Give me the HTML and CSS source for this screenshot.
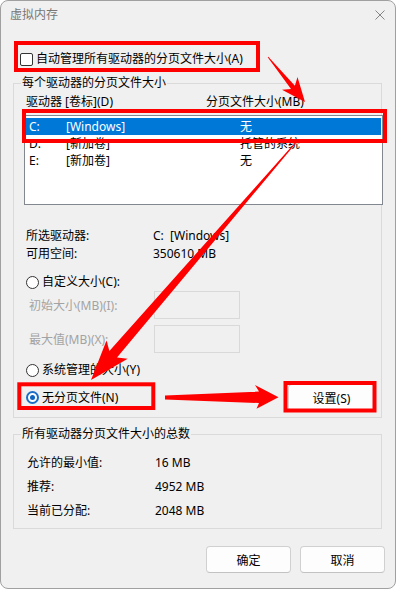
FILE: index.html
```html
<!DOCTYPE html>
<html lang="zh-CN">
<head>
<meta charset="utf-8">
<title>虚拟内存</title>
<link rel="stylesheet" href="styles.css">
</head>
<body>
<div class="window">
  <div class="titlebar">
    <span class="title">虚拟内存</span>
    <svg class="close" width="10" height="10" viewBox="0 0 10 10"><path d="M0.5 0.5L9.5 9.5M9.5 0.5L0.5 9.5" stroke="#858585" stroke-width="1" fill="none"/></svg>
  </div>
  <div class="content">
    <div class="check-row">
      <span class="checkbox"></span>
      <span>自动管理所有驱动器的分页文件大小(A)</span>
    </div>

    <div class="group group-drives">
      <div class="legend">每个驱动器的分页文件大小</div>
      <div class="list-head">
        <span class="head-drive">驱动器 [卷标](D)</span>
        <span>分页文件大小(MB)</span>
      </div>
      <div class="listbox">
        <div class="row selected"><span class="c1">C:</span><span class="c2">[Windows]</span><span class="c3">无</span></div>
        <div class="row"><span class="c1">D:</span><span class="c2">[新加卷]</span><span class="c3">托管的系统</span></div>
        <div class="row"><span class="c1">E:</span><span class="c2">[新加卷]</span><span class="c3">无</span></div>
      </div>
      <div class="info">
        <div class="info-row"><span class="info-label">所选驱动器:</span><span class="info-val">C:  [Windows]</span></div>
        <div class="info-row"><span class="info-label">可用空间:</span><span class="info-val">350610 MB</span></div>
      </div>
      <div class="radio-row r-custom"><span class="radio"></span><span>自定义大小(C):</span></div>
      <div class="field-row f-init"><span class="field-label">初始大小(MB)(I):</span><span class="input"></span></div>
      <div class="field-row f-max"><span class="field-label">最大值(MB)(X):</span><span class="input"></span></div>
      <div class="radio-row r-system"><span class="radio"></span><span>系统管理的大小(Y)</span></div>
      <div class="set-row">
        <div class="radio-row"><span class="radio checked"></span><span>无分页文件(N)</span></div>
        <button class="btn btn-set">设置(S)</button>
      </div>
    </div>

    <div class="group group-total">
      <div class="legend">所有驱动器分页文件大小的总数</div>
      <div class="totals">
        <div class="total-row"><span class="total-label">允许的最小值:</span><span>16 MB</span></div>
        <div class="total-row"><span class="total-label">推荐:</span><span>4952 MB</span></div>
        <div class="total-row"><span class="total-label">当前已分配:</span><span>2048 MB</span></div>
      </div>
    </div>

    <div class="actions">
      <button class="btn btn-dialog">确定</button>
      <button class="btn btn-dialog">取消</button>
    </div>
  </div>

  <svg class="annot" width="396" height="589" viewBox="0 0 396 589">
    <g fill="none" stroke="#ff0000" stroke-width="4">
      <rect x="16" y="43" width="242" height="27"/>
      <rect x="24" y="111" width="361" height="30"/>
      <rect x="19.3" y="384.3" width="134" height="23.7"/>
      <rect x="285.5" y="383" width="89" height="27.5"/>
    </g>
    <g fill="#ff0000">
      <polygon points="268.3,56.7 294.9,85.7 297.5,77.1 305,102 282,89.8 291,88.9 267.7,57.3"/>
      <polygon points="298.4,140.3 117,357.6 127.7,358.8 91,380 106.5,340.6 109.4,351 297.6,139.7"/>
      <polygon points="165,395.5 259,391.5 255,385 278.5,397.3 256.5,408.8 259,403 165,399.5"/>
    </g>
  </svg>
</div>
</body>
</html>
```

FILE: styles.css
```css
body {
  margin: 0;
  font-family: "Noto Sans", "Noto Sans CJK SC", sans-serif;
  font-size: 12px;
  color: #000;
  background: #fff;
}

.window {
  position: relative;
  width: 396px;
  height: 589px;
  box-sizing: border-box;
  border: 1px solid #a0a0a0;
  border-radius: 8px;
  background: #f0f0f0;
  overflow: hidden;
}

.titlebar {
  height: 28px;
  display: flex;
  align-items: center;
  justify-content: space-between;
  padding: 0 10px 0 9px;
}

.title {
  color: #777;
  line-height: 16px;
}

.close {
  display: block;
}

.content {
  padding: 0 10px 0 12px;
}

.check-row {
  display: flex;
  align-items: center;
  height: 16px;
  line-height: 16px;
  margin: 22px 0 0 7px;
  gap: 3px;
}

.checkbox {
  width: 13px;
  height: 13px;
  box-sizing: border-box;
  border: 1px solid #333;
  border-radius: 2px;
  background: #fff;
}

.group {
  width: 369px;
  box-sizing: border-box;
  border: 1px solid #dadada;
}

.group-drives {
  margin-top: 16px;
  padding-bottom: 6px;
}

.legend {
  width: max-content;
  height: 16px;
  line-height: 16px;
  margin: -9px 0 0 7px;
  padding: 0 1px;
  background: #f0f0f0;
}

.list-head {
  display: flex;
  height: 16px;
  line-height: 16px;
  margin: 3px 0 0 12px;
}

.head-drive {
  width: 180px;
}

.listbox {
  width: 359px;
  height: 90px;
  box-sizing: border-box;
  margin: 5px 0 0 10px;
  padding-top: 2px;
  border: 1px solid #828790;
  background: #fff;
}

.row {
  display: flex;
  height: 17px;
  line-height: 17px;
  margin: 0 1px;
  padding-left: 3px;
}

.row.selected {
  background: #0078d7;
  color: #fff;
}

.c1 { width: 37px; }
.c2 { width: 174px; }

.info {
  margin-top: 22px;
}

.info-row {
  display: flex;
  height: 18px;
  line-height: 18px;
  margin-left: 12px;
}

.info-label {
  width: 127px;
}

.info-val {
  white-space: pre;
}

.radio-row {
  display: flex;
  align-items: center;
  height: 16px;
  line-height: 16px;
  gap: 3px;
  margin-left: 12px;
}

.r-custom {
  margin-top: 11px;
}

.r-system {
  margin-top: 9px;
}

.radio {
  position: relative;
  width: 13px;
  height: 13px;
  box-sizing: border-box;
  border: 1px solid #333;
  border-radius: 50%;
  background: #fff;
}

.radio.checked {
  border: 2px solid #1b6ec6;
}

.radio.checked::after {
  content: "";
  position: absolute;
  left: 2px;
  top: 2px;
  width: 5px;
  height: 5px;
  border-radius: 50%;
  background: #0f64bf;
}

.field-row {
  display: flex;
  align-items: center;
  height: 28px;
  margin-left: 15px;
  color: #a3a3a3;
}

.f-init {
  margin-top: 1px;
}

.f-max {
  margin-top: 6px;
}

.field-label {
  width: 125px;
}

.input {
  width: 86px;
  height: 28px;
  box-sizing: border-box;
  border: 1px solid #d9d9d9;
  background: #f0f0f0;
}

.set-row {
  display: flex;
  align-items: center;
  justify-content: space-between;
  height: 27px;
  margin-top: 6px;
}

.set-row .radio-row {
  margin-left: 12px;
}

.btn {
  font-family: inherit;
  font-size: 12px;
  color: #000;
  background: #fdfdfd;
  border: 1px solid #d0d0d0;
  border-bottom-color: #c2c2c2;
  border-radius: 4px;
  padding: 0;
  height: 27px;
  box-sizing: border-box;
}

.btn-set {
  width: 87px;
  margin-right: 6px;
}

.group-total {
  margin-top: 16px;
  padding-bottom: 5px;
}

.totals {
  margin-top: 9px;
}

.total-row {
  display: flex;
  height: 24px;
  line-height: 24px;
  margin-left: 13px;
}

.total-label {
  width: 128px;
}

.actions {
  display: flex;
  justify-content: flex-end;
  gap: 9px;
  margin-top: 17px;
}

.btn-dialog {
  width: 85px;
}

.annot {
  position: absolute;
  left: -1px;
  top: -1px;
  pointer-events: none;
}
```
